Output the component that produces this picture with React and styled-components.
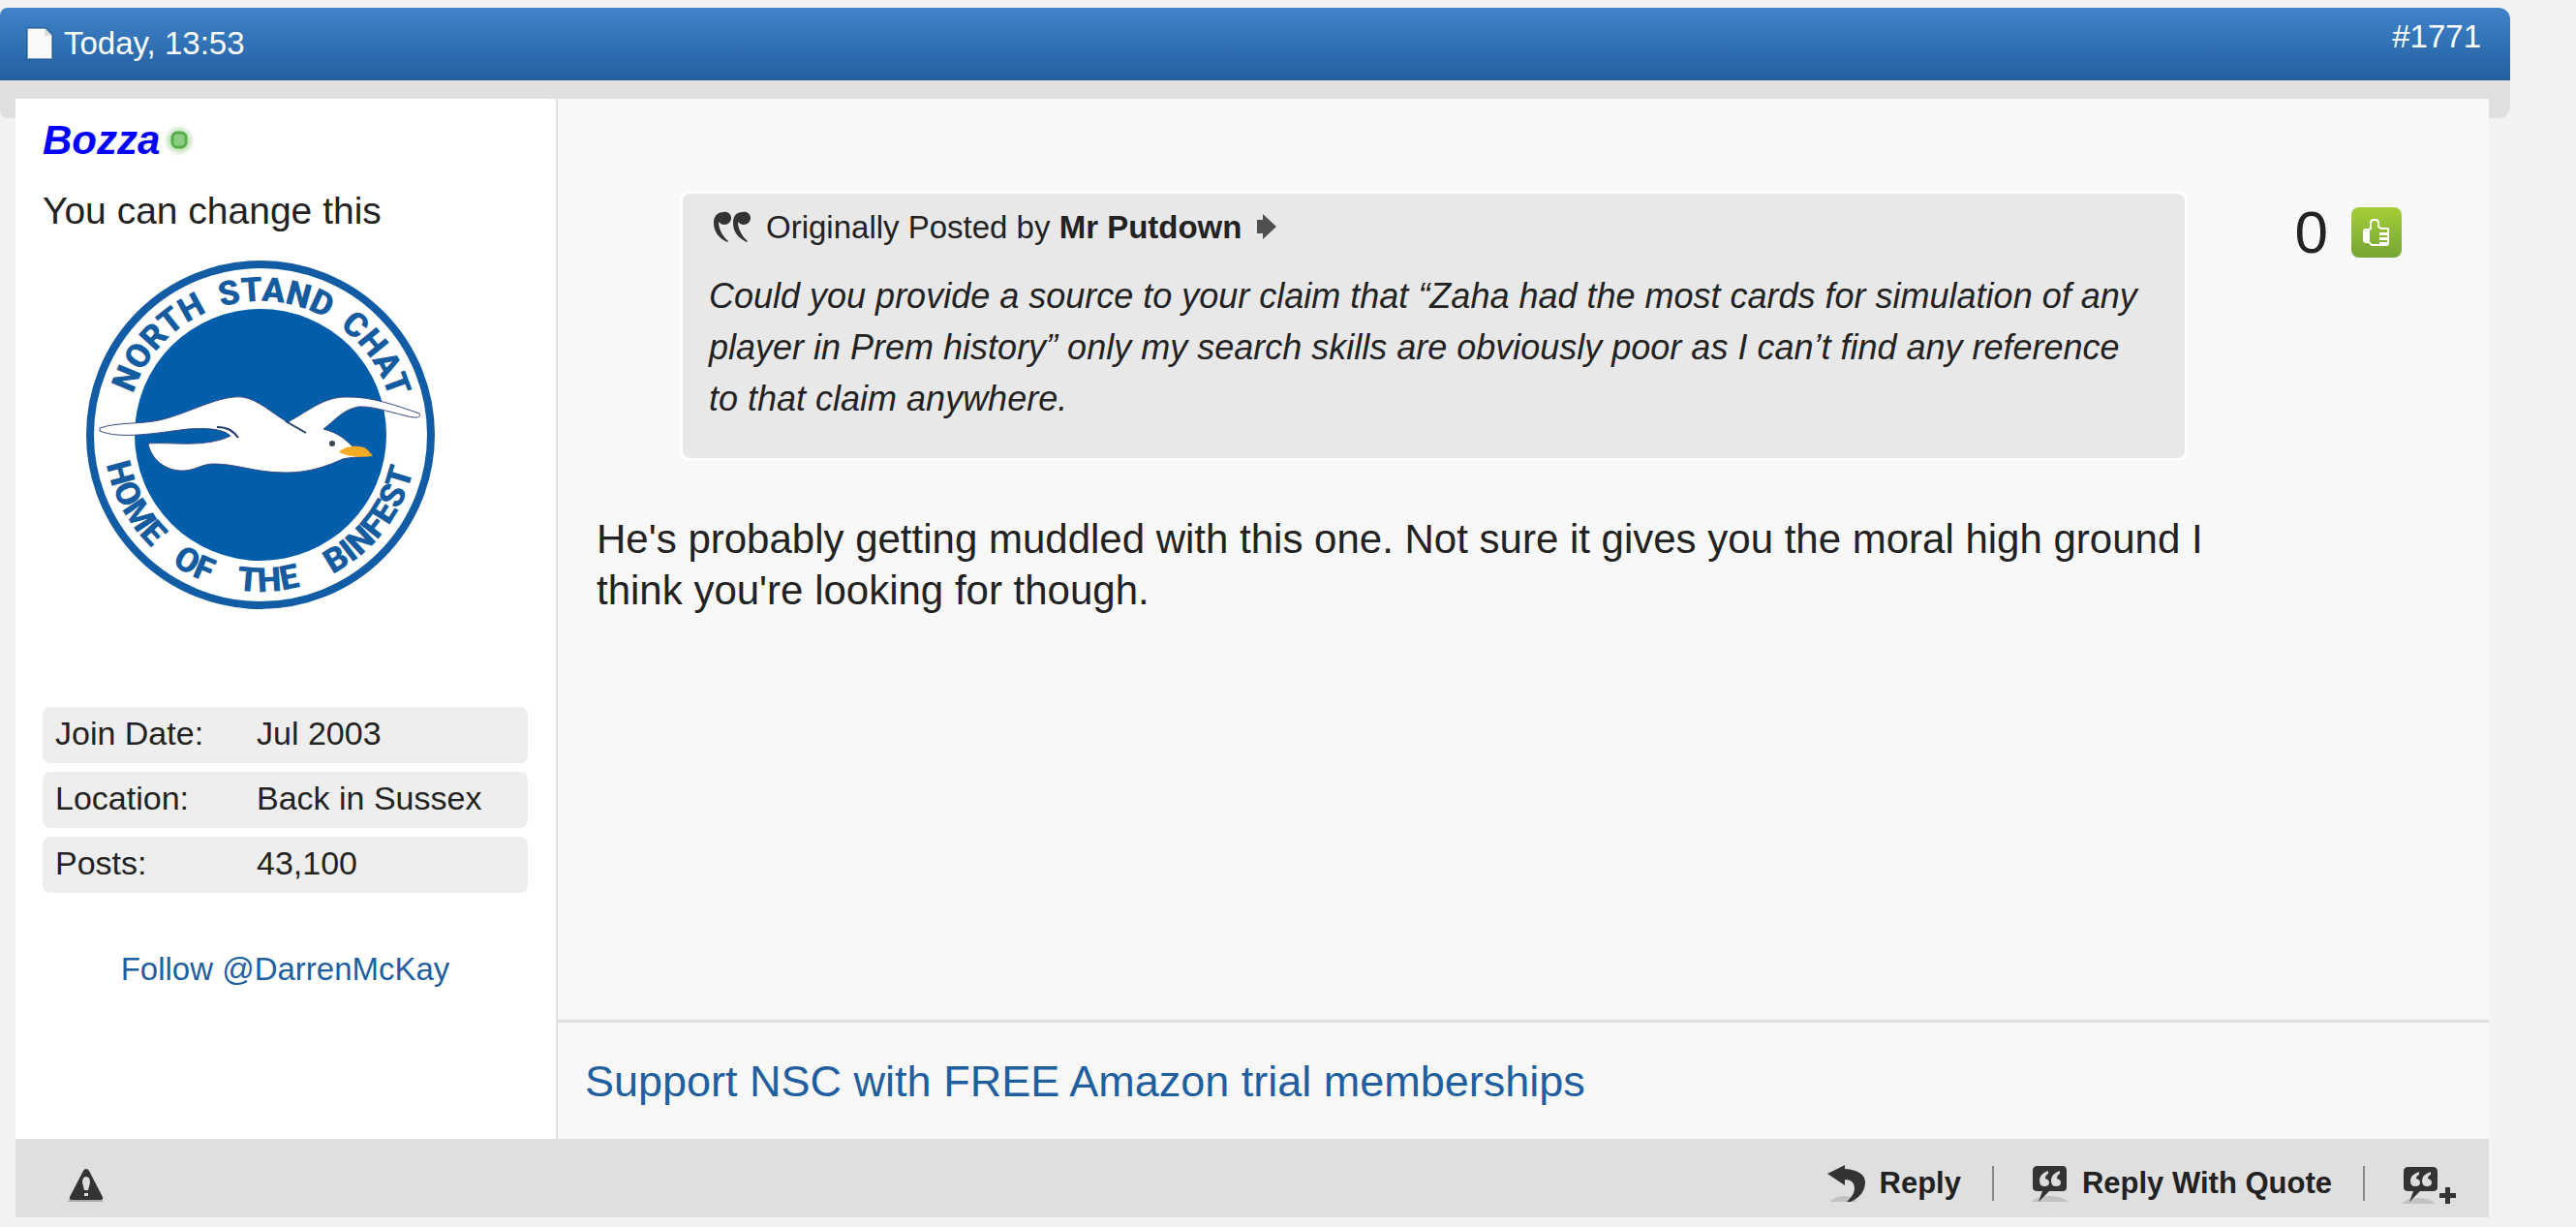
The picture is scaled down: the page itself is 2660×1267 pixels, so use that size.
import React from 'react';
import styled, { createGlobalStyle } from 'styled-components';

const GlobalStyle = createGlobalStyle`
  * {
    box-sizing: border-box;
  }

  body {
    margin: 0;
    background: #f2f2f2;
    color: #222;
    font-family: 'Liberation Sans', Arial, sans-serif;
    font-size: 33px;
    line-height: 40px;
  }
`;

const Post = styled.article`
  padding: 8px 68px 10px 0;
`;

const PostHead = styled.header`
  display: flex;
  justify-content: space-between;
  align-items: flex-start;
  height: 75px;
  padding: 10px 30px 0 24px;
  border-radius: 8px 12px 0 0;
  background: linear-gradient(#4184ca, #215f9f);
  color: #fff;
`;

const PostDate = styled.span`
  display: flex;
  align-items: center;
  gap: 8px;
  padding-top: 7px;
`;

const PostNumber = styled.a`
  color: #fff;
  text-decoration: none;
`;

// grey strip whose rounded ends stick out on both sides of the body
const Shelf = styled.div`
  height: 39px;
  margin-bottom: -20px;
  border-radius: 0 0 12px 8px;
  background: #dfdfdf;
`;

const PostPanel = styled.div`
  margin: 0 22px 0 16px;
`;

const PostBody = styled.div`
  display: flex;
  min-height: 1074px;
`;

const UserInfo = styled.aside`
  display: flex;
  flex-direction: column;
  flex: 0 0 560px;
  padding: 20px 29px 0 28px;
  border-right: 2px solid #dfdfdf;
  background: #fff;
`;

const UserRow = styled.div`
  display: flex;
  align-items: center;
  gap: 4px;
  height: 46px;
`;

const UserName = styled.a`
  color: #00f;
  font-size: 42px;
  font-style: italic;
  font-weight: bold;
  text-decoration: none;
`;

const UserTitle = styled.p`
  margin: 26px 0 0;
  font-size: 39px;
  line-height: 48px;
`;

const AvatarLink = styled.a`
  display: block;
  margin: 26px 0 100px 44px;
  line-height: 0;
`;

const Stats = styled.dl`
  display: flex;
  flex-direction: column;
  gap: 9px;
  margin: 0;
  font-size: 34px;
`;

const Stat = styled.div`
  display: flex;
  height: 58px;
  padding: 7px 13px;
  border-radius: 8px;
  background: #eee;
`;

const StatLabel = styled.dt`
  width: 208px;
`;

const StatValue = styled.dd`
  margin: 0;
`;

const FollowLink = styled.a`
  align-self: center;
  margin-top: 59px;
  color: #1f5f9f;
  text-decoration: none;
`;

const PostMain = styled.div`
  display: flex;
  flex-direction: column;
  flex: 1;
  background: #f8f8f8;
`;

const PostContent = styled.div`
  display: flex;
  justify-content: space-between;
  flex: 1;
  padding: 95px 90px 0 40px;
`;

const Message = styled.div`
  flex: 1;
  max-width: 1690px;
  font-size: 42px;
  line-height: 53px;
`;

const Quote = styled.blockquote`
  margin: 0 47px 0 86px;
  padding: 10px 36px 35px 27px;
  border: 3px solid #fff;
  border-radius: 10px;
  background: #e8e8e8;
`;

const QuoteSource = styled.div`
  display: flex;
  align-items: center;
  gap: 15px;
  height: 48px;
  padding-left: 4px;
  font-size: 33px;
`;

const ViewPostLink = styled.a`
  display: flex;
`;

const QuoteText = styled.p`
  margin: 21px 0 0;
  font-size: 36px;
  font-style: italic;
`;

const MessageText = styled.p`
  margin: 54px 0 0;
`;

const Rating = styled.div`
  display: flex;
  align-items: center;
  gap: 24px;
  height: 85px;
  font-size: 62px;
`;

const LikeButton = styled.button`
  display: flex;
  align-items: center;
  justify-content: center;
  width: 52px;
  height: 52px;
  padding: 0;
  border: 0;
  border-radius: 8px;
  background: linear-gradient(#a5cf38, #76a535);
`;

const Signature = styled.div`
  height: 123px;
  padding: 35px 28px;
  border-top: 3px solid #dfdfdf;
  font-size: 45px;
  line-height: 52px;
`;

const SignatureLink = styled.a`
  color: #1f5f9f;
  text-decoration: none;
`;

const PostFoot = styled.footer`
  display: flex;
  align-items: center;
  justify-content: space-between;
  height: 81px;
  padding: 10px 32px 0 54px;
  background: #dfdfdf;
`;

const Controls = styled.div`
  display: flex;
  align-items: center;
  gap: 32px;
`;

const ControlLink = styled.a`
  display: flex;
  align-items: center;
  gap: 13px;
  color: #222;
  font-size: 31px;
  font-weight: bold;
  text-decoration: none;
`;

const Divider = styled.span`
  width: 2px;
  height: 36px;
  margin-right: 6px;
  background: #888;
`;

const PageIcon = () => (
  <svg width="34" height="38" viewBox="0 0 34 38">
    <path d="M4 3h19l7 7v25H4z" fill="#fafafa" stroke="#1d5288" strokeOpacity=".55" strokeWidth="2" />
    <path d="M22 4v7h7z" fill="#d9dde2" />
  </svg>
);

const OnlineIcon = () => (
  <svg width="32" height="36" viewBox="0 0 32 36">
    <defs>
      <radialGradient id="online-glow">
        <stop offset="40%" stopColor="#6cbf5e" stopOpacity=".6" />
        <stop offset="100%" stopColor="#6cbf5e" stopOpacity="0" />
      </radialGradient>
    </defs>
    <circle cx="16" cy="18" r="16" fill="url(#online-glow)" />
    <rect x="9" y="10" width="14" height="15" rx="5" fill="#8ccb82" stroke="#58ad4b" strokeWidth="3" />
  </svg>
);

const Avatar = () => (
  <svg width="362" height="362" viewBox="0 0 362 362" role="img" aria-label="North Stand Chat">
    <defs>
      <path id="arc-top" d="M43 181a138 138 0 0 1 276 0" />
      <path id="arc-bottom" d="M19 181a162 162 0 0 0 324 0" />
    </defs>
    <circle cx="181" cy="181" r="176" fill="#fff" stroke="#125ca5" strokeWidth="8" />
    <circle cx="181" cy="181" r="130" fill="#025dab" />
    <g fill="#155ba0" fontFamily="Roboto, 'Liberation Sans', sans-serif" fontSize="35" fontWeight="900" textAnchor="middle">
      <text>
        <textPath href="#arc-top" startOffset="23.4%">NORTH</textPath>
      </text>
      <text>
        <textPath href="#arc-top" startOffset="53.5%">STAND</textPath>
      </text>
      <text>
        <textPath href="#arc-top" startOffset="80.6%">CHAT</textPath>
      </text>
      <text>
        <textPath href="#arc-bottom" startOffset="15.8%">HOME</textPath>
      </text>
      <text>
        <textPath href="#arc-bottom" startOffset="35%">OF</textPath>
      </text>
      <text>
        <textPath href="#arc-bottom" startOffset="51.7%">THE</textPath>
      </text>
      <text>
        <textPath href="#arc-bottom" startOffset="79%">BINFEST</textPath>
      </text>
    </g>
    <path
      d="M15 174C35 167 62 171 84 164C112 156 140 140 162 142C178 144 192 158 209 168C228 158 246 142 268 142C296 141 322 151 345 159C348 164 340 164 330 161C312 157 296 151 282 152C266 155 258 166 246 175C262 179 270 187 276 193C288 194 294 197 296 202C286 204 274 204 266 206C250 213 232 220 208 220C174 220 158 211 132 211C120 211 112 219 98 218C82 217 68 206 65 190C88 188 124 195 150 182C142 174 122 174 106 175C74 179 36 186 15 177z"
      fill="#fff"
      stroke="#3b4a82"
      strokeWidth="1"
    />
    <path d="M158 184C152 176 146 173 136 173M207 167L228 179" fill="none" stroke="#223a6b" strokeWidth="2" />
    <path d="M264 197C270 192 286 191 291 196L297 203C287 204 276 205 262 199z" fill="#f6ab24" />
    <circle cx="255" cy="190" r="3" fill="#39474f" />
  </svg>
);

const QuoteMarksIcon = () => (
  <svg width="40" height="34" viewBox="0 0 40 34">
    <g fill="#333">
      <path id="quote-mark" d="M11 2c4-1 8 2 8 6s-3 7-7 7c-3 0-4-1-6-3 0 8 5 16 10 20l-1 1C6 29 1 22 1 13 1 6 5 2 11 2z" />
      <use href="#quote-mark" x="20" />
    </g>
  </svg>
);

const ViewPostIcon = () => (
  <svg width="22" height="28" viewBox="0 0 22 28">
    <path d="M1 7h6V1l14 13L7 27v-6H1z" fill="#4f4f4f" />
  </svg>
);

const ThumbIcon = () => (
  <svg width="28" height="28" viewBox="0 0 28 28">
    <path d="M6 11l2-1V4q0-3 3-3h2q3 0 3 3v4l3 2h7v15q0 2-2 2H9l-3-3z" fill="none" stroke="#fff" strokeWidth="2" />
    <path d="M0 12l2-2h3v15H2l-2-2zM17 14h10v3H17zM17 19h10v3H17zM17 24h10v2H17z" fill="#fff" />
  </svg>
);

const ReportIcon = () => (
  <svg width="38" height="38" viewBox="0 0 38 38">
    <path d="M2 35h34v3H0z" fill="#aaa" />
    <path d="M19 4q2 0 3 2l14 27q1 3-3 3H5q-4 0-3-3L16 6q1-2 3-2z" fill="#333" />
    <path d="M19 12q4 0 4 6l-2 8h-4l-2-8q0-6 4-6zM17 29h4v3h-4z" fill="#ddd" />
  </svg>
);

const ReplyIcon = () => (
  <svg width="42" height="40" viewBox="0 0 42 40">
    <path d="M4 39q4-6 14-6t14 6z" fill="#c2c2c2" />
    <path d="M1 10L19 1v4c14 1 21 6 21 14 0 9-6 16-15 20h-4c5-5 8-9 8-14 0-6-4-9-10-9v6z" fill="#333" />
  </svg>
);

const QuoteBubbleIcon = () => (
  <svg width="40" height="40" viewBox="0 0 40 40">
    <path d="M1 39q4-6 18-6t20 6z" fill="#c2c2c2" />
    <path d="M7 2h26q4 0 4 5v17q0 4-4 4H19L8 39l4-11H7q-5 0-5-4V7q0-5 5-5z" fill="#333" />
    <path d="M18 7q-9 3-9 10 0 6 5 6 5 0 5-4 0-3-4-4 0-4 3-5zM30 7q-9 3-9 10 0 6 5 6 5 0 5-4 0-3-4-4 0-4 3-5z" fill="#ddd" />
  </svg>
);

const MultiQuoteIcon = () => (
  <svg width="58" height="44" viewBox="0 0 58 44">
    <path d="M0 43q4-6 17-6t17 6z" fill="#c2c2c2" />
    <path d="M7 5h25q5 0 5 5v16q0 4-5 4H19L8 41l4-11H7q-5 0-5-4V10q0-5 5-5z" fill="#333" />
    <path d="M18 10q-9 3-9 9 0 6 5 6 5 0 5-4 0-3-4-4 0-3 3-4zM30 10q-9 3-9 9 0 6 5 6 5 0 5-4 0-3-4-4 0-3 3-4z" fill="#ddd" />
    <path d="M45 26h5v6h6v5h-6v6h-5v-6h-6v-5h6z" fill="#333" />
  </svg>
);

const App = () => {
  const stats = [
    { label: 'Join Date:', value: 'Jul 2003' },
    { label: 'Location:', value: 'Back in Sussex' },
    { label: 'Posts:', value: '43,100' },
  ];

  return (
    <>
      <GlobalStyle />
      <Post>
        <PostHead>
          <PostDate>
            <PageIcon />
            Today, 13:53
          </PostDate>
          <PostNumber href="#post1771">#1771</PostNumber>
        </PostHead>
        <Shelf />
        <PostPanel>
          <PostBody>
            <UserInfo>
              <UserRow>
                <UserName href="#bozza">Bozza</UserName>
                <OnlineIcon />
              </UserRow>
              <UserTitle>You can change this</UserTitle>
              <AvatarLink href="#bozza">
                <Avatar />
              </AvatarLink>
              <Stats>
                {stats.map((stat) => (
                  <Stat key={stat.label}>
                    <StatLabel>{stat.label}</StatLabel>
                    <StatValue>{stat.value}</StatValue>
                  </Stat>
                ))}
              </Stats>
              <FollowLink href="#follow">Follow @DarrenMcKay</FollowLink>
            </UserInfo>
            <PostMain>
              <PostContent>
                <Message>
                  <Quote>
                    <QuoteSource>
                      <QuoteMarksIcon />
                      <span>
                        Originally Posted by <strong>Mr Putdown</strong>
                      </span>
                      <ViewPostLink href="#quoted" aria-label="View Post">
                        <ViewPostIcon />
                      </ViewPostLink>
                    </QuoteSource>
                    <QuoteText>
                      Could you provide a source to your claim that “Zaha had the most cards for simulation of any
                      player in Prem history” only my search skills are obviously poor as I can’t find any reference
                      to that claim anywhere.
                    </QuoteText>
                  </Quote>
                  <MessageText>
                    He's probably getting muddled with this one. Not sure it gives you the moral high ground I think
                    you're looking for though.
                  </MessageText>
                </Message>
                <Rating>
                  <span>0</span>
                  <LikeButton type="button" aria-label="Thumbs up">
                    <ThumbIcon />
                  </LikeButton>
                </Rating>
              </PostContent>
              <Signature>
                <SignatureLink href="#support">Support NSC with FREE Amazon trial memberships</SignatureLink>
              </Signature>
            </PostMain>
          </PostBody>
          <PostFoot>
            <ControlLink href="#report" aria-label="Report Post">
              <ReportIcon />
            </ControlLink>
            <Controls>
              <ControlLink href="#reply">
                <ReplyIcon />
                Reply
              </ControlLink>
              <Divider />
              <ControlLink href="#reply-quote">
                <QuoteBubbleIcon />
                Reply With Quote
              </ControlLink>
              <Divider />
              <ControlLink href="#multi-quote" aria-label="Multi-Quote This Message">
                <MultiQuoteIcon />
              </ControlLink>
            </Controls>
          </PostFoot>
        </PostPanel>
      </Post>
    </>
  );
};

export default App;
